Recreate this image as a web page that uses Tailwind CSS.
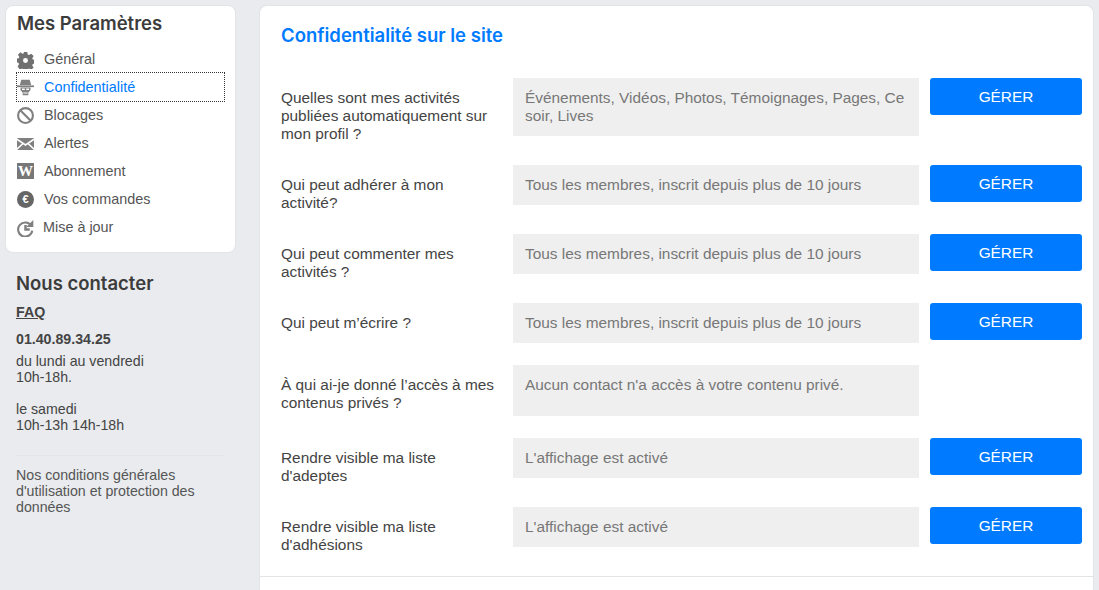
<!DOCTYPE html>
<html lang="fr">
<head>
    <meta charset="UTF-8">
    <title>Mes Paramètres</title>
    <script src="https://cdn.jsdelivr.net/npm/@tailwindcss/browser@4"></script>
</head>
<body class="bg-[#e9ebee] text-[#444] font-['Liberation_Sans',sans-serif] text-[14.200px] leading-[16px] h-[590px] overflow-hidden">
    <div class="flex items-start pl-[5px] pt-[5px] gap-[23px]">

        <!-- Sidebar -->
        <aside class="w-[231px] shrink-0">
            <div class="bg-white rounded-[8px] border border-[#e2e4e8] h-[248px] px-[10px]">
                <h2 class="font-['Inter',sans-serif] font-semibold text-[18.500px] leading-[24px] pt-[5px] pl-[1px] text-[#3c3c3c]">Mes Paramètres</h2>
                <ul class="mt-[10px] text-[14.400px]">
                    <li class="h-[28px] mx-[1px] flex items-center gap-[10px] text-[#555]">
                        <svg class="w-[17px] h-[17px] mt-[2px]" viewBox="0 0 24 24" fill="#707070"><path fill-rule="evenodd" d="M9.500 0h5l.6 3.500 2 .8 2.900-2 3.500 3.500-2 2.900.8 2 3.500.6v5l-3.500.6-.8 2 2 2.900-3.500 3.500-2.900-2-2 .8-.6 3.500h-5l-.6-3.500-2-.8-2.900 2L.9 20.100l2-2.900-.8-2L-1 14.500v-5l3.500-.6.8-2-2-2.900L4.800 .5l2.900 2 2 -.8zM12 8.500a3.500 3.500 0 1 0 0 7 3.500 3.500 0 0 0 0-7z"/></svg>
                        <span>Général</span>
                    </li>
                    <li class="h-[28px] mx-[1px] flex items-center gap-[10px] text-[#007bff] outline-1 outline-dotted outline-[#333]">
                        <svg class="w-[17px] h-[17px]" viewBox="0 0 24 24" fill="#808080"><path d="M6 1h12l2 7.500H4z"/><path d="M0 9h24v2.500H0z"/><path d="M5 12h14v4l-3 3v4H8v-4l-3-3z"/><path fill="#fff" d="M7 13.500h4v2H7zM13 13.500h4v2h-4zM9 19h6v1.500H9z"/></svg>
                        <span>Confidentialité</span>
                    </li>
                    <li class="h-[28px] mx-[1px] flex items-center gap-[10px] text-[#555]">
                        <svg class="w-[17px] h-[17px]" viewBox="0 0 24 24" fill="none" stroke="#808080" stroke-width="3"><circle cx="12" cy="12" r="10.500"/><path d="M5 5l14 14"/></svg>
                        <span>Blocages</span>
                    </li>
                    <li class="h-[28px] mx-[1px] flex items-center gap-[10px] text-[#555]">
                        <svg class="w-[17px] h-[12px] mt-[1px]" viewBox="0 0 17 12"><path fill="#808080" d="M0 0h17v12H0z"/><path fill="none" stroke="#fff" stroke-width="1.600" d="M-1 .5L8.500 7 18 .5M-1 12l7-6.500M18 12l-7-6.500"/></svg>
                        <span>Alertes</span>
                    </li>
                    <li class="h-[28px] mx-[1px] flex items-center gap-[10px] text-[#555]">
                        <div class="w-[17px] h-[16px] bg-[#777] text-white font-['Liberation_Serif',serif] font-bold text-[15px] leading-[16px] text-center">W</div>
                        <span>Abonnement</span>
                    </li>
                    <li class="h-[28px] mx-[1px] flex items-center gap-[10px] text-[#555]">
                        <div class="w-[17px] h-[17px] rounded-full bg-[#666] text-white font-bold text-[11px] leading-[17px] text-center">€</div>
                        <span>Vos commandes</span>
                    </li>
                    <li class="h-[28px] mx-[1px] flex items-center gap-[9px] text-[#555]">
                        <svg class="w-[17px] h-[17px] mt-[2px]" viewBox="0 0 24 24" fill="none" stroke="#808080" stroke-width="3"><path d="M20 8A10 10 0 1 0 21.500 15"/><path d="M12 7v6.500h6" stroke-width="3.500"/><path fill="#808080" stroke="none" d="M23 0v10h-10z"/></svg>
                        <span>Mise à jour</span>
                    </li>
                </ul>
            </div>

            <div class="px-[11px]">
                <h2 class="font-['Inter',sans-serif] font-semibold text-[18.500px] leading-[24px] mt-[18px] text-[#3c3c3c]">Nous contacter</h2>
                <a class="block font-bold underline mt-[9px]">FAQ</a>
                <p class="font-bold mt-[11px]">01.40.89.34.25</p>
                <p class="mt-[6px]">du lundi au vendredi<br>10h-18h.<br><br>le samedi<br>10h-13h 14h-18h</p>
                <div class="border-t border-[#e2e4e8] mt-[22px] pt-[11px] text-[#555]">
                    Nos conditions générales d'utilisation et protection des données
                </div>
            </div>
        </aside>

        <!-- Main -->
        <main class="w-[835px] bg-white rounded-t-[8px] border border-b-0 border-[#e2e4e8] h-[585px] pt-[17px] text-[15.400px] leading-[18px]">
            <h1 class="font-['Inter',sans-serif] font-semibold text-[18.500px] leading-[24px] text-[#007bff] pl-[21px]">Confidentialité sur le site</h1>

            <div class="mt-[31px] pl-[21px] pr-[10px] border-b border-[#e2e4e8]">
                <div class="flex items-start pb-[22px]">
                    <p class="w-[232px] pr-[16px] shrink-0 pt-[11px]">Quelles sont mes activités publiées automatiquement sur mon profil ?</p>
                    <div class="w-[406px] h-[58px] bg-[#efefef] px-[12px] pt-[11px] text-[#777]">Événements, Vidéos, Photos, Témoignages, Pages, Ce soir, Lives</div>
                    <button class="ml-[11px] w-[152px] h-[37px] bg-[#007bff] text-white rounded-[3px]">GÉRER</button>
                </div>
                <div class="flex items-start pb-[22px]">
                    <p class="w-[232px] pr-[16px] shrink-0 pt-[11px]">Qui peut adhérer à mon activité?</p>
                    <div class="w-[406px] h-[40px] bg-[#efefef] px-[12px] pt-[11px] text-[#777]">Tous les membres, inscrit depuis plus de 10 jours</div>
                    <button class="ml-[11px] w-[152px] h-[37px] bg-[#007bff] text-white rounded-[3px]">GÉRER</button>
                </div>
                <div class="flex items-start pb-[22px]">
                    <p class="w-[232px] pr-[16px] shrink-0 pt-[11px]">Qui peut commenter mes activités ?</p>
                    <div class="w-[406px] h-[40px] bg-[#efefef] px-[12px] pt-[11px] text-[#777]">Tous les membres, inscrit depuis plus de 10 jours</div>
                    <button class="ml-[11px] w-[152px] h-[37px] bg-[#007bff] text-white rounded-[3px]">GÉRER</button>
                </div>
                <div class="flex items-start pb-[22px]">
                    <p class="w-[232px] pr-[16px] shrink-0 pt-[11px]">Qui peut m’écrire ?</p>
                    <div class="w-[406px] h-[40px] bg-[#efefef] px-[12px] pt-[11px] text-[#777]">Tous les membres, inscrit depuis plus de 10 jours</div>
                    <button class="ml-[11px] w-[152px] h-[37px] bg-[#007bff] text-white rounded-[3px]">GÉRER</button>
                </div>
                <div class="flex items-start pb-[22px]">
                    <p class="w-[232px] pr-[16px] shrink-0 pt-[11px]">À qui ai-je donné l’accès à mes contenus privés ?</p>
                    <div class="w-[406px] h-[51px] bg-[#efefef] px-[12px] pt-[11px] text-[#777]">Aucun contact n'a accès à votre contenu privé.</div>
                </div>
                <div class="flex items-start pb-[22px]">
                    <p class="w-[232px] pr-[16px] shrink-0 pt-[11px]">Rendre visible ma liste d'adeptes</p>
                    <div class="w-[406px] h-[40px] bg-[#efefef] px-[12px] pt-[11px] text-[#777]">L'affichage est activé</div>
                    <button class="ml-[11px] w-[152px] h-[37px] bg-[#007bff] text-white rounded-[3px]">GÉRER</button>
                </div>
                <div class="flex items-start pb-[22px]">
                    <p class="w-[232px] pr-[16px] shrink-0 pt-[11px]">Rendre visible ma liste d'adhésions</p>
                    <div class="w-[406px] h-[40px] bg-[#efefef] px-[12px] pt-[11px] text-[#777]">L'affichage est activé</div>
                    <button class="ml-[11px] w-[152px] h-[37px] bg-[#007bff] text-white rounded-[3px]">GÉRER</button>
                </div>
            </div>
        </main>
    </div>
</body>
</html>
